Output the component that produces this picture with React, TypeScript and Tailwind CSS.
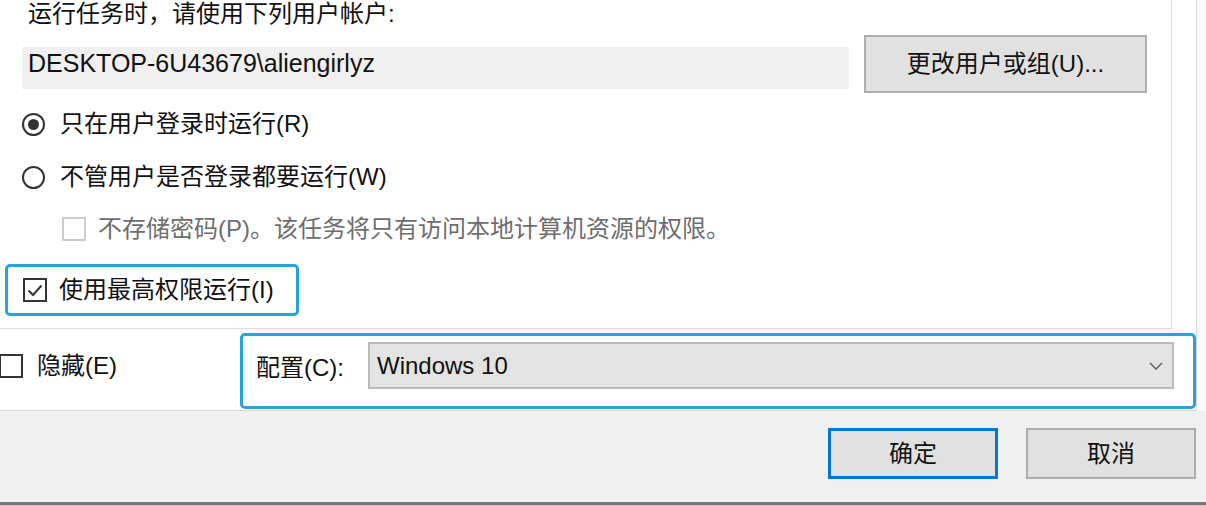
import React from "react"

const font = { fontFamily: '"Liberation Sans", "Noto Sans CJK SC", sans-serif' }

function Radio({ checked }: { checked?: boolean }) {
  return (
    <span className="flex h-[23px] w-[23px] shrink-0 items-center justify-center rounded-full border-2 border-[#333333] bg-white">
      {checked && <span className="h-[11px] w-[11px] rounded-full bg-[#333333]" />}
    </span>
  )
}

function Check({ checked, disabled }: { checked?: boolean; disabled?: boolean }) {
  return (
    <span
      className={`flex h-[24px] w-[24px] shrink-0 items-center justify-center border-2 bg-white ${
        disabled ? "border-[#cccccc]" : "border-[#333333]"
      }`}
    >
      {checked && (
        <svg width="16" height="13" viewBox="0 0 16 13" fill="none">
          <path d="M1.5 6.5 L6 11 L14.5 1.5" stroke="#333333" strokeWidth="2" />
        </svg>
      )}
    </span>
  )
}

export default function App() {
  return (
    <div className="flex h-[506px] w-[1206px] flex-col overflow-hidden bg-white text-[#111111]" style={font}>
      <div className="flex h-[411px] shrink-0">
        <div className="flex h-[411px] w-[1197px] shrink-0 flex-col border-r border-b border-[#d9d9d9] bg-white">
          {/* security options */}
          <div className="flex h-[329px] w-[1172px] shrink-0 flex-col border-r border-b border-[#dcdcdc]">
            <p className="ml-[28px] h-[28px] text-[24px] leading-[28px]">运行任务时，请使用下列用户帐户:</p>

            <div className="mt-[7px] ml-[22px] flex items-start">
              <div className="mt-[12px] h-[42px] w-[827px] bg-[#f0f0f0] pt-[1px] pl-[6px] text-[25px] leading-[30px]">
                DESKTOP-6U43679\aliengirlyz
              </div>
              <button className="ml-[15px] flex h-[58px] w-[283px] items-center justify-center border-2 border-[#adadad] bg-[#e1e1e1] text-[24px]">
                更改用户或组(U)...
              </button>
            </div>

            <label className="mt-[16px] ml-[22px] flex h-[30px] items-center">
              <Radio checked />
              <span className="ml-[15px] text-[24px] leading-[30px]">只在用户登录时运行(R)</span>
            </label>

            <label className="mt-[23px] ml-[22px] flex h-[30px] items-center">
              <Radio />
              <span className="ml-[15px] text-[24px] leading-[30px]">不管用户是否登录都要运行(W)</span>
            </label>

            <label className="mt-[22px] ml-[62px] flex h-[30px] items-center">
              <Check disabled />
              <span className="ml-[12px] text-[24px] leading-[30px] text-[#6d6d6d]">
                不存储密码(P)。该任务将只有访问本地计算机资源的权限。
              </span>
            </label>

            <label className="mt-[20px] ml-[5px] flex h-[52px] w-[294px] items-center rounded-[5px] border-[3px] border-[#29a3dc] pl-[15px]">
              <Check checked />
              <span className="ml-[12px] text-[24px] leading-[30px]">使用最高权限运行(I)</span>
            </label>
          </div>

          {/* hidden + configure */}
          <div className="flex items-start">
            <label className="mt-[22px] flex h-[30px] w-[240px] shrink-0 items-center">
              <span className="ml-[-1px]">
                <Check />
              </span>
              <span className="ml-[14px] text-[24px] leading-[30px]">隐藏(E)</span>
            </label>
            <div className="mt-[4px] flex h-[76px] w-[956px] items-start rounded-[5px] border-[3px] border-[#29a3dc] pt-[6px] pl-[13px]">
              <span className="flex h-[47px] w-[112px] shrink-0 items-center pt-[4px] text-[24px]">配置(C):</span>
              <div className="flex h-[47px] w-[806px] items-center justify-between border-2 border-[#bcbcbc] bg-[#e3e3e3] pr-[9px] pl-[7px]">
                <span className="text-[24px] leading-[30px]">Windows 10</span>
                <svg width="14" height="8" viewBox="0 0 14 8" fill="none">
                  <path d="M1 1 L7 7 L13 1" stroke="#555555" strokeWidth="1.3" />
                </svg>
              </div>
            </div>
          </div>
        </div>
        <div className="flex-1 bg-[#fafafa]" />
      </div>

      {/* dialog buttons */}
      <div className="flex h-[91px] shrink-0 items-start justify-end gap-[28px] bg-[#f0f0f0] pt-[17px] pr-[10px]">
        <button className="flex h-[51px] w-[170px] items-center justify-center border-[3px] border-[#0078d7] bg-[#e1e1e1] text-[24px]">
          确定
        </button>
        <button className="flex h-[51px] w-[170px] items-center justify-center border-2 border-[#adadad] bg-[#e1e1e1] text-[24px]">
          取消
        </button>
      </div>
      <div className="h-[3px] shrink-0 bg-[#777777]" />
      <div className="flex-1 bg-[#cfcfcf]" />
    </div>
  )
}
